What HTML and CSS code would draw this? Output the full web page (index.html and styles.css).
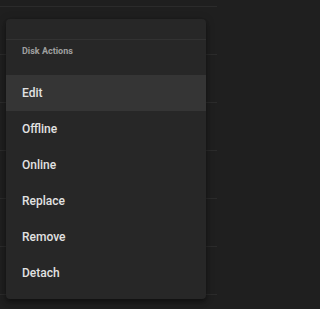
FILE: index.html
```html
<!DOCTYPE html>
<html lang="en">
<head>
<meta charset="utf-8">
<title>Disk Actions</title>
<link rel="stylesheet" href="styles.css">
</head>
<body>
<div class="table">
  <div class="row first"></div>
  <div class="row"></div>
  <div class="row"></div>
  <div class="row"></div>
  <div class="row"></div>
  <div class="row"></div>
  <div class="row"></div>
</div>
<div class="menu">
  <div class="menu-top"></div>
  <div class="menu-title">Disk Actions</div>
  <div class="item active">Edit</div>
  <div class="item">Offline</div>
  <div class="item">Online</div>
  <div class="item">Replace</div>
  <div class="item">Remove</div>
  <div class="item">Detach</div>
</div>
</body>
</html>
```
FILE: styles.css
```css
html, body {
  margin: 0;
  padding: 0;
  background: #1f1f1f;
  width: 217px;
  height: 309px;
  overflow: hidden;
  font-family: Roboto, "Liberation Sans", sans-serif;
}
.table {
  display: flex;
  flex-direction: column;
}
.row {
  height: 47px;
  border-bottom: 1px solid #2b2b2b;
}
.row.first {
  height: 6px;
}
.menu {
  position: absolute;
  left: 6px;
  top: 19px;
  width: 200px;
  height: 280px;
  background: #272727;
  border-radius: 4px;
  box-shadow: 0 2px 4px -1px rgba(0,0,0,0.3), 0 4px 5px 0 rgba(0,0,0,0.2), 0 1px 10px 0 rgba(0,0,0,0.18);
  display: flex;
  flex-direction: column;
}
.menu-top {
  height: 20px;
  border-bottom: 1px solid #323232;
}
.menu-title {
  height: 22px;
  margin-bottom: 13px;
  display: flex;
  align-items: center;
  padding-left: 16px;
  font-size: 9px;
  font-weight: 700;
  color: #a0a0a0;
}
.item {
  height: 36px;
  display: flex;
  align-items: center;
  padding-left: 16px;
  font-size: 12px;
  font-weight: 500;
  color: #e2e2e2;
}
.item.active {
  background: #353535;
}
```
